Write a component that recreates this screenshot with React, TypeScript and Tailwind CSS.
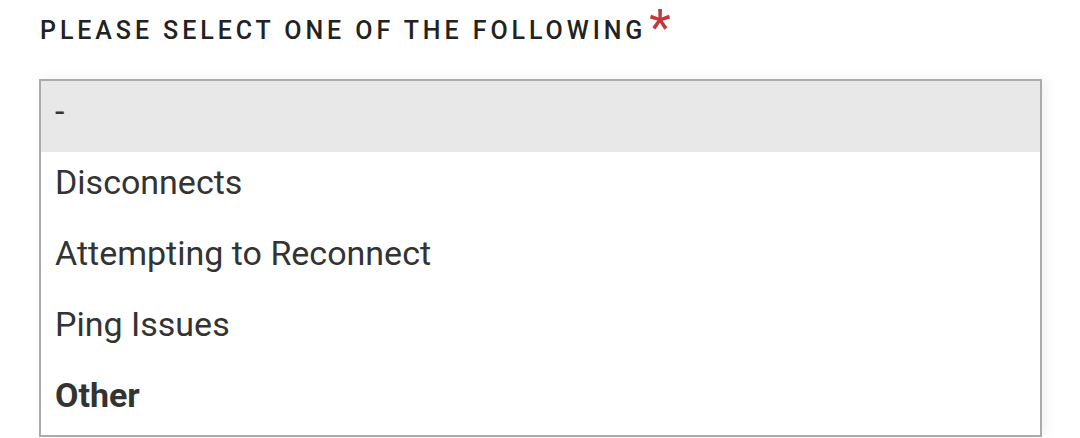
import React from "react";

const options = [
  { label: "-", selected: true },
  { label: "Disconnects" },
  { label: "Attempting to Reconnect" },
  { label: "Ping Issues" },
  { label: "Other", bold: true },
];

export default function App() {
  return (
    <div className="w-[1080px] h-[438px] bg-white overflow-hidden font-['Roboto',sans-serif] text-[#333]">
      <div className="pl-10 pt-[2px] h-[79px] flex items-start">
        <span className="mt-[12px] text-[25px] font-medium tracking-[0.157em] text-[#222] leading-[34px]">
          PLEASE SELECT ONE OF THE FOLLOWING
        </span>
        <span className="text-[50px] leading-[52px] h-[52px] text-[#c0393b] ml-[3px]">*</span>
      </div>
      <div className="ml-[39px] w-[1003px] border-2 border-[#ababab] shadow-[4px_0_12px_rgba(0,0,0,0.06)]">
        {options.map((o, i) => (
          <div
            key={o.label}
            className={
              "flex items-center pl-[14px] pb-[10px] text-[34px] " +
              (i === 4 ? "h-[70px] " : "h-[71px] ") +
              (o.selected ? "bg-[#e8e8e8] " : "bg-white ") +
              (o.bold ? "font-bold" : "font-normal")
            }
          >
            {o.label}
          </div>
        ))}
      </div>
    </div>
  );
}
